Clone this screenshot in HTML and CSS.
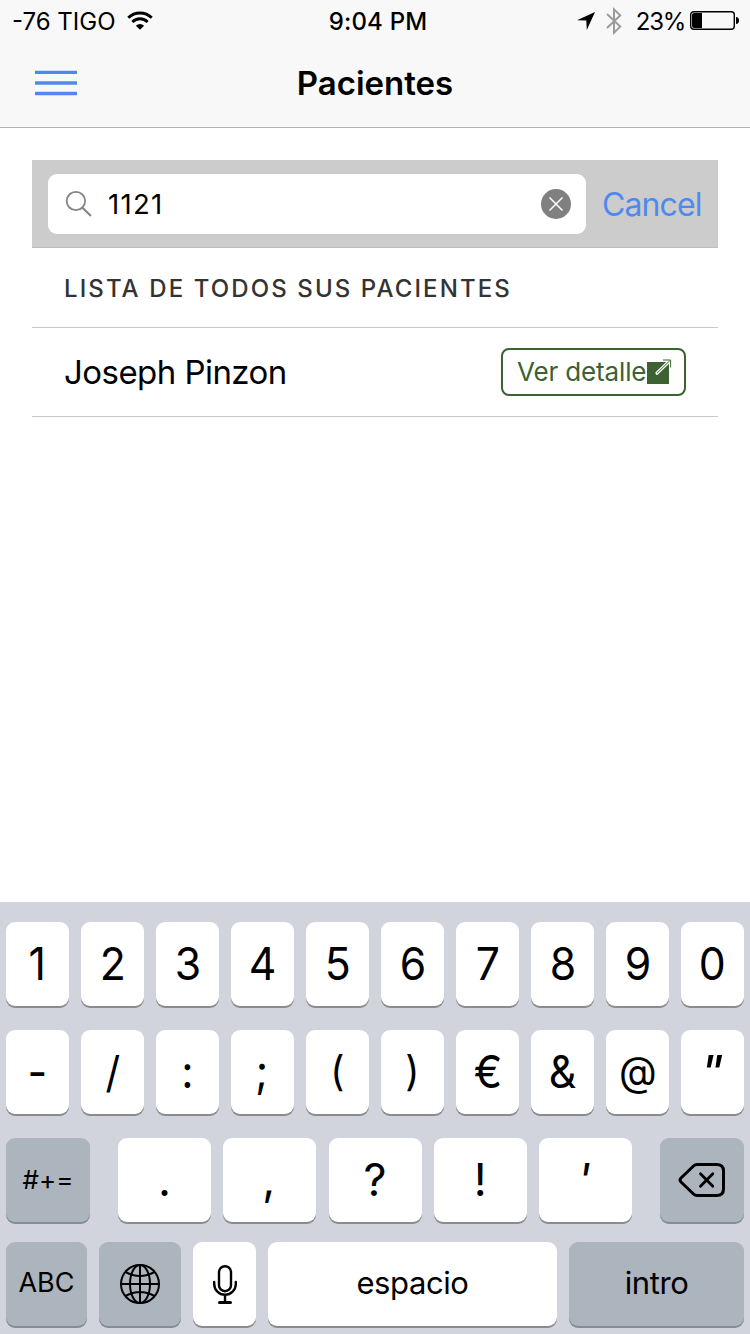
FILE: index.html
```html
<!DOCTYPE html>
<html lang="es">
<head>
<meta charset="utf-8">
<title>Pacientes</title>
<link rel="stylesheet" href="styles.css">
</head>
<body>
<div class="screen">
  <header class="top">
    <div class="status">
      <div class="status-left">
        <span class="carrier">-76 TIGO</span>
        <svg class="wifi" width="26" height="20" viewBox="0 0 26 20">
          <g fill="none" stroke="#000" stroke-width="3">
            <path d="M1.3 6.7A16.6 16.6 0 0 1 24.7 6.7"/>
            <path d="M5.4 11A10.8 10.8 0 0 1 20.6 11"/>
          </g>
          <path d="M13 18.8L8.9 14.7A5.8 5.8 0 0 1 17.1 14.7Z"/>
        </svg>
      </div>
      <div class="time">9:04 PM</div>
      <div class="status-right">
        <svg class="location" width="18" height="18" viewBox="0 0 18 18"><path d="M18 0L9.8 18L9.3 8.6L0 8.2Z"/></svg>
        <svg class="bluetooth" width="16" height="28" viewBox="0 0 16 28"><path d="M1 7L14.2 19.6L8 25.6V2.4L14.2 8.4L1 21" fill="none" stroke="#9b9b9b" stroke-width="2"/></svg>
        <span class="percent">23%</span>
        <svg class="battery" width="49" height="20" viewBox="0 0 49 20">
          <rect x=".7" y=".7" width="43.6" height="17.6" rx="3" fill="none" stroke="#000" stroke-width="1.4"/>
          <path d="M2 4Q2 2 4 2H12V17H4Q2 17 2 15ZM46 6Q49 6.300 49 9.500Q49 12.700 46 13Z"/>
        </svg>
      </div>
    </div>
    <nav class="nav">
      <svg class="menu" width="42" height="26" viewBox="0 0 42 26"><path d="M0 2.300H42M0 13H42M0 23.500H42" stroke="#5089ee" stroke-width="3.300"/></svg>
      <h1 class="title">Pacientes</h1>
    </nav>
  </header>

  <main class="content">
    <div class="search">
      <div class="field">
        <svg class="lens" width="27" height="27" viewBox="0 0 27 27" fill="none" stroke="#868686" stroke-width="1.800"><circle cx="10.900" cy="11" r="9.200"/><path d="M17.500 17.700L26 26" stroke-width="2.200"/></svg>
        <span class="query">1121</span>
        <svg class="clear" width="30" height="30" viewBox="0 0 30 30"><circle cx="15" cy="15" r="15" fill="#808080"/><path d="M8.500 8.500L21.500 21.500M21.500 8.500L8.500 21.500" stroke="#fff" stroke-width="1.500"/></svg>
      </div>
      <span class="cancel">Cancel</span>
    </div>
    <div class="list-header">LISTA DE TODOS SUS PACIENTES</div>
    <div class="item">
      <span class="name">Joseph Pinzon</span>
      <span class="detail"><span class="detail-text">Ver detalle</span><svg class="open" width="25" height="25" viewBox="0 0 25 25">
        <path d="M0 3H22V25H0Z" fill="#3b6230"/>
        <path d="M10 14.200L21.500 3" stroke="#fff" stroke-width="3.200" stroke-linecap="round"/>
        <path d="M10 14.200L22.500 2" stroke="#3b6230" stroke-width="1"/>
        <path d="M16 1H23.600V8.500" fill="none" stroke="#3b6230" stroke-width="1"/>
      </svg></span>
    </div>
  </main>

  <section class="keyboard">
    <div class="keys row-ten">
      <div class="key"><span>1</span></div><div class="key"><span>2</span></div><div class="key"><span>3</span></div><div class="key"><span>4</span></div><div class="key"><span>5</span></div><div class="key"><span>6</span></div><div class="key"><span>7</span></div><div class="key"><span>8</span></div><div class="key"><span>9</span></div><div class="key"><span>0</span></div>
    </div>
    <div class="keys row-ten">
      <div class="key"><span>-</span></div><div class="key slash"><span>/</span></div><div class="key"><span>:</span></div><div class="key low"><span>;</span></div><div class="key tall"><span>(</span></div><div class="key tall"><span>)</span></div><div class="key"><span>€</span></div><div class="key"><span>&amp;</span></div><div class="key tall"><span>@</span></div><div class="key slant double"><span>"</span></div>
    </div>
    <div class="keys row-punct">
      <div class="key dark symbols"><span>#+=</span></div>
      <div class="punct">
        <div class="key"><span>.</span></div><div class="key low"><span>,</span></div><div class="key"><span>?</span></div><div class="key"><span>!</span></div><div class="key slant"><span>'</span></div>
      </div>
      <div class="key dark"><svg class="erase" width="48" height="36" viewBox="0 0 48 36" fill="none" stroke="#000" stroke-width="3" stroke-linejoin="round" stroke-linecap="round"><path d="M19 2.500H38.500Q45.500 2.500 45.500 9V27Q45.500 33.500 38.500 33.500H19Q17 33.500 15.500 32L3 20Q1 18 3 16L15.500 4Q17 2.500 19 2.500Z"/><path d="M22.500 11.800L34.800 24.200M34.800 11.800L22.500 24.200" stroke-width="2.800"/></svg></div>
    </div>
    <div class="keys row-bottom">
      <div class="key dark abc"><span>ABC</span></div>
      <div class="key dark"><svg width="40" height="40" viewBox="0 0 40 40" fill="none" stroke="#000" stroke-width="2"><circle cx="20" cy="20" r="19"/><ellipse cx="20" cy="20" rx="10" ry="19"/><path d="M20 1V39M1 20H39M5.500 8Q20 16 34.500 8M5.500 32Q20 24 34.500 32"/></svg></div>
      <div class="key"><svg width="26" height="40" viewBox="0 0 26 40" fill="none" stroke="#000" stroke-width="2.400" stroke-linecap="round"><rect x="7" y="2.200" width="12" height="25" rx="6"/><path d="M2.200 18V20A10.800 10.800 0 0 0 23.800 20V18M13 31V38"/><path d="M7.500 38.500H18.500" stroke-width="3"/></svg></div>
      <div class="key word"><span>espacio</span></div>
      <div class="key dark word"><span>intro</span></div>
    </div>
  </section>
</div>
</body>
</html>
```
FILE: styles.css
```css
* { box-sizing: border-box; }
body {
  margin: 0;
  font-family: Inter, "Liberation Sans", sans-serif;
  color: #000;
  background: #fff;
}
svg { display: block; flex: none; }
.screen {
  width: 750px;
  height: 1334px;
  display: flex;
  flex-direction: column;
  overflow: hidden;
}
.top {
  height: 128px;
  background: #f8f8f8;
  border-bottom: 1px solid #b2b2b2;
}
.status {
  height: 41px;
  display: grid;
  grid-template-columns: 1fr auto 1fr;
  align-items: center;
  padding: 0 11px 0 12px;
  font-size: 24px;
  line-height: 40px;
}
.status-left, .status-right { display: flex; align-items: center; }
.status-right { justify-content: flex-end; }
.carrier { width: 115px; padding-top: 2px; }
.time { font-weight: 500; letter-spacing: 0.2px; padding: 2px 0 0 5px; }
.location { margin-right: 11px; }
.bluetooth { margin-right: 14px; }
.percent { margin-right: 5px; padding-top: 2px; letter-spacing: -1.3px; }
.nav {
  height: 84px;
  display: grid;
  grid-template-columns: 42px 1fr 42px;
  align-items: center;
  padding: 0 35px;
}
.title {
  margin: 0;
  text-align: center;
  font-size: 33px;
  line-height: 40px;
  font-weight: 600;
}
.content { flex: 1; padding: 32px 32px 0; }
.search {
  height: 88px;
  display: flex;
  align-items: center;
  gap: 16px;
  padding: 0 0 0 16px;
  background: #ccc;
  border-bottom: 1px solid #bfbfbf;
}
.field {
  flex: none;
  width: 538px;
  height: 60px;
  display: flex;
  align-items: center;
  padding: 0 15px 0 17px;
  border-radius: 9px;
  background: #fff;
}
.query {
  flex: 1;
  padding: 1px 0 0 16px;
  font-size: 27.5px;
  letter-spacing: 1.3px;
}
.cancel {
  padding-top: 2px;
  font-size: 32px;
  letter-spacing: -0.9px;
  color: #5089ee;
  white-space: nowrap;
}
.list-header {
  height: 80px;
  display: flex;
  align-items: center;
  padding: 2px 0 0 32px;
  border-bottom: 1px solid #c8c7cc;
  font-size: 24px;
  font-weight: 450;
  letter-spacing: 2.1px;
  color: #333;
  white-space: nowrap;
}
.item {
  height: 89px;
  display: flex;
  align-items: center;
  justify-content: space-between;
  padding: 0 32px;
  border-bottom: 1px solid #c8c7cc;
}
.name { font-size: 33px; letter-spacing: -0.55px; }
.detail {
  width: 185px;
  height: 48px;
  display: flex;
  align-items: center;
  padding-left: 14px;
  border: 2px solid #3b6230;
  border-radius: 8px;
  color: #3b6230;
  font-size: 26px;
  letter-spacing: -0.15px;
  line-height: 32px;
  white-space: nowrap;
}
.detail-text { width: 130px; }
.open { margin-top: -1px; }
.keyboard {
  height: 432px;
  padding: 20px 6px 8px;
  background: #d1d4dc;
}
.keys { display: grid; height: 84px; margin-bottom: 24px; column-gap: 12px; }
.row-ten { grid-template-columns: repeat(10, 63px); }
.row-punct {
  grid-template-columns: 84px 514px 84px;
  column-gap: 28px;
  margin-bottom: 20px;
}
.punct { display: grid; grid-template-columns: repeat(5, 1fr); column-gap: 12.250px; }
.row-bottom { grid-template-columns: 81px 82px 63px 289px 175px; margin: 0; }
.key {
  display: flex;
  align-items: center;
  justify-content: center;
  border-radius: 9px;
  background: #fff;
  box-shadow: 0 2px 0 #898b8f;
  font-size: 45px;
  line-height: 54px;
}
.row-ten span { transform: scaleX(0.95); }
.dark { background: #acb4be; }
.slant { font-style: italic; padding-right: 3px; }
.low { padding: 0 2px 2px 0; }
.slash { font-size: 43px; }
.row-ten .double span { transform: scaleX(1.15); }
.tall { font-size: 41px; padding-bottom: 3px; }
.symbols { font-size: 26px; }
.abc { font-size: 27px; padding-bottom: 2px; }
.word { font-size: 31px; letter-spacing: -0.4px; padding-bottom: 2px; }
```
